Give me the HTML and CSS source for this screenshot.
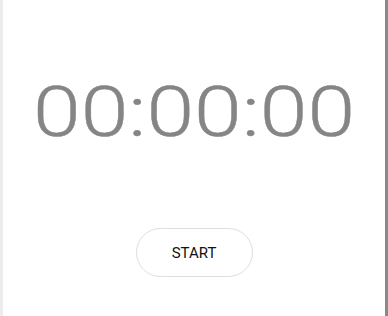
FILE: index.html
```html
<!DOCTYPE html>
<html>
<head>
<meta charset="utf-8">
<link rel="stylesheet" href="styles.css">
</head>
<body>
<div class="frame">
  <div class="panel">
    <div class="time">00:00:00</div>
    <button class="start">START</button>
  </div>
</div>
</body>
</html>
```
FILE: styles.css
```css
html, body {
  margin: 0;
  padding: 0;
  background: #fff;
}
.frame {
  width: 388px;
  height: 316px;
  box-sizing: border-box;
  border-left: 3px solid #ececec;
  border-right: 3px solid #8a8a8a;
  display: flex;
}
.panel {
  flex: 1;
  display: flex;
  flex-direction: column;
  align-items: center;
  padding-top: 70px;
}
.time {
  font-family: Roboto, "Liberation Sans", sans-serif;
  font-weight: 300;
  font-size: 71px;
  line-height: 84px;
  color: #858585;
  transform: scaleX(1.21);
  -webkit-text-stroke: 0.4px #858585;
}
.start {
  margin-top: 74px;
  width: 117px;
  height: 49px;
  border: 1px solid #dedede;
  border-radius: 25px;
  background: #fff;
  font-family: Roboto, "Liberation Sans", sans-serif;
  font-size: 15px;
  font-weight: 400;
  color: #111;
  padding: 0;
}
```
